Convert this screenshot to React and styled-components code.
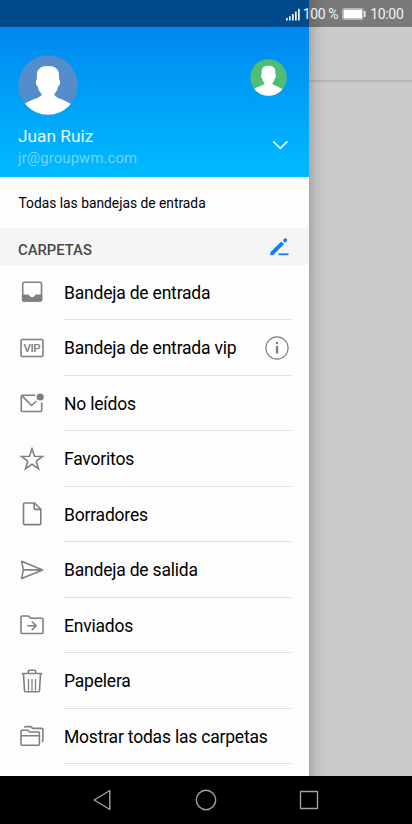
import React from 'react';
import styled, { createGlobalStyle } from 'styled-components';

const GlobalStyle = createGlobalStyle`
  * {
    box-sizing: border-box;
  }

  body {
    margin: 0;
    background: #000;
    font-family: Roboto, 'Liberation Sans', sans-serif;
  }
`;

const Screen = styled.div`
  display: flex;
  flex-direction: column;
  width: 412px;
  height: 824px;
  overflow: hidden;
`;

const StatusBar = styled.div`
  display: flex;
  flex: none;
  align-items: center;
  justify-content: flex-end;
  height: 27px;
  padding: 1px 8.5px 0 0;
  color: #f2f2f2;
  font-size: 14px;
  background: linear-gradient(to right, #004a8b 309px, #696969 309px, #797979 325px);
`;

const StatusText = styled.span`
  white-space: nowrap;
  letter-spacing: ${({ $spacing }) => $spacing || '0'};
`;

const SignalIcon = styled.svg`
  margin-right: 3px;
`;

const BatteryIcon = styled.svg`
  margin: 0 4px 0 4px;
`;

const Body = styled.div`
  display: flex;
  flex: none;
  height: 749px;
`;

const Drawer = styled.div`
  display: flex;
  flex-direction: column;
  flex: none;
  width: 309px;
  overflow: hidden;
  background: #fdfdfd;
`;

const Backdrop = styled.div`
  flex: 1;
  background: linear-gradient(to right, #a9a9a9, #bdbdbd 6px, #c9c9c9 14px, #cbcbcb 20px);
`;

const BackdropToolbar = styled.div`
  height: 55px;
  border-bottom: 2px solid rgba(0, 0, 0, 0.1);
`;

const Header = styled.div`
  display: flex;
  flex: none;
  flex-direction: column;
  height: 150px;
  padding: 27.5px 18px 0;
  background: linear-gradient(#0187f0, #00bbff);
`;

const Avatars = styled.div`
  display: flex;
  justify-content: space-between;
  align-items: flex-start;
  height: 70px;
  padding-right: 4.5px;
`;

const AccountAvatar = styled.svg`
  width: ${({ $size }) => $size}px;
  height: ${({ $size }) => $size}px;
  margin-top: ${({ $top }) => $top || 0}px;
`;

const Account = styled.div`
  display: flex;
  justify-content: space-between;
`;

const AccountName = styled.div`
  color: #e6f8ff;
  font-size: 17.3px;
  line-height: 22px;
`;

const AccountMail = styled.div`
  color: #72d3ff;
  font-size: 14.8px;
  line-height: 22px;
  letter-spacing: 0.15px;
`;

const Chevron = styled.svg`
  margin: 12px 1px 0 0;
`;

const AllInboxes = styled.div`
  flex: none;
  height: 51px;
  padding-left: 18.5px;
  color: #000;
  font-size: 13.8px;
  line-height: 52px;
`;

const SectionHeader = styled.div`
  display: flex;
  flex: none;
  align-items: center;
  justify-content: space-between;
  height: 37px;
  padding: 0 18px;
  background: #f5f5f5;
`;

const SectionTitle = styled.span`
  padding-top: 7px;
  color: #484848;
  font-size: 14.8px;
  font-weight: 500;
`;

const FolderList = styled.ul`
  margin: -0.5px 0 0;
  padding: 0;
  list-style: none;
`;

const Folder = styled.li`
  display: flex;
  height: 55.5px;
  padding: 0 18px;
`;

const FolderIcon = styled.svg`
  flex: none;
  width: 28px;
  height: 28px;
  margin: 13.5px 18px 0 0;
  fill: none;
  stroke: #808080;
  stroke-width: 1.6;
  stroke-linejoin: round;
  stroke-linecap: round;
`;

const FolderContent = styled.div`
  display: flex;
  flex: 1;
  align-items: center;
  justify-content: space-between;
  padding-top: 2px;
  border-bottom: 1px solid #e0e0e0;
`;

const FolderName = styled.span`
  color: #000;
  font-size: 17.5px;
  letter-spacing: -0.2px;
  white-space: nowrap;
`;

const InfoIcon = styled.svg`
  margin: 0 2.5px 1.5px 0;
`;

const NavBar = styled.div`
  display: flex;
  flex: none;
  align-items: center;
  justify-content: center;
  gap: 79px;
  height: 48px;
  background: #000;
`;

const NavIcon = styled.svg`
  width: 24px;
  height: 24px;
  fill: none;
  stroke: #a2a2a2;
  stroke-width: 1.4;
  stroke-linejoin: round;
`;

const folders = [
  {
    name: 'Bandeja de entrada',
    icon: (
      <>
        <rect x="4.7" y="4.2" width="18.8" height="18.8" rx="1.5" />
        <path d="M4.7 17.300h5.200c.8 0 .9 2.800 4.200 2.800s3.400-2.800 4.200-2.800h5.200v4.700a1 1 0 0 1-1 1H5.700a1 1 0 0 1-1-1z" fill="#808080" />
      </>
    ),
  },
  {
    name: 'Bandeja de entrada vip',
    info: true,
    icon: (
      <>
        <rect x="3" y="5.500" width="22" height="17" rx="1.2" />
        <text x="14" y="18" textAnchor="middle" fill="#808080" stroke="none" fontSize="11.5" fontWeight="500" textLength="17">VIP</text>
      </>
    ),
  },
  {
    name: 'No leídos',
    icon: (
      <>
        <path d="M17.3 6.2H4.3a1 1 0 0 0-1 1v14.300a1 1 0 0 0 1 1h18.400a1 1 0 0 0 1-1V13.500" strokeLinecap="butt" />
        <path d="M4 6.900l9.600 9.600 4.700-4.500" strokeLinecap="butt" />
        <circle cx="22.2" cy="8" r="3.6" fill="#808080" stroke="none" />
      </>
    ),
  },
  {
    name: 'Favoritos',
    icon: <path d="M14 4l2.600 7.300 7.900.1-6.300 4.800 2.300 7.600-6.500-4.500-6.500 4.500 2.300-7.600-6.300-4.800 7.900-.1z" strokeLinejoin="miter" />,
  },
  {
    name: 'Borradores',
    icon: (
      <>
        <path d="M16.500 3H6.700a1.200 1.200 0 0 0-1.200 1.200v19.200a1.200 1.200 0 0 0 1.200 1.200h14.900a1.200 1.200 0 0 0 1.200-1.200V9.300z" />
        <path d="M16.200 3.300v5.100a1 1 0 0 0 1 1h5.300" />
      </>
    ),
  },
  {
    name: 'Bandeja de salida',
    icon: <path d="M3.600 5.300l21 8.600-21 8.500 1.800-8.500zM5.500 13.900h18" />,
  },
  {
    name: 'Enviados',
    icon: (
      <>
        <path d="M3 21.500V6a1 1 0 0 1 1-1h6.200l2.600 2.200H24a1 1 0 0 1 1 1v13.300a1 1 0 0 1-1 1H4a1 1 0 0 1-1-1z" />
        <path d="M9.800 14.800h8.200M14.300 11l3.800 3.800-3.800 3.800" />
      </>
    ),
  },
  {
    name: 'Papelera',
    icon: (
      <>
        <path d="M4.300 6.500h19.400M10 6.300l.6-2.500a.8.8 0 0 1 .8-.6h5.200a.8.8 0 0 1 .8.6l.6 2.500" />
        <path d="M5.500 6.800l1 16.700a1.300 1.300 0 0 0 1.300 1.200h12.400a1.300 1.300 0 0 0 1.300-1.200l1-16.700" />
        <path d="M10.500 12.500V23M14 12.500V23M17.500 12.500V23" strokeWidth="1.3" />
      </>
    ),
  },
  {
    name: 'Mostrar todas las carpetas',
    icon: (
      <>
        <path d="M3 22.300V9.200a1 1 0 0 1 1-1h5.600l2 1.800h8.800a1 1 0 0 1 1 1v11.300a1 1 0 0 1-1 1H4a1 1 0 0 1-1-1zM3 13.800h18.400" />
        <path d="M6.800 5.100a1 1 0 0 1 .9-.5h5.100l2 1.800h9.100a1 1 0 0 1 1 1v11.200a1 1 0 0 1-.6.9" />
      </>
    ),
  },
];

function Avatar({ size, color, top }) {
  const clip = `avatar-${size}`;

  return (
    <AccountAvatar viewBox="0 0 60 60" $size={size} $top={top}>
      <clipPath id={clip}>
        <circle cx="30" cy="30" r="29.7" />
      </clipPath>
      <circle cx="30" cy="30" r="29.7" fill={color} />
      <path
        clipPath={`url(#${clip})`}
        fill="#fff"
        d="M30 11c7.400 0 11 3.400 11 9v4.600c1.500.4 1.400 6-.9 7-.8 4.200-2.200 5.600-3.600 7.200v1.400c2 3 9.500 4.200 16.500 8.800V62H6V49c7-4.600 15-5.800 17.500-8.800v-1.400c-1.500-1.600-3.100-3-3.700-7.200-2.300-1-2.400-6.600-.9-7V20c0-5.600 3.700-9 11.100-9z"
      />
    </AccountAvatar>
  );
}

export default function App() {
  return (
    <Screen>
      <GlobalStyle />
      <StatusBar>
        <SignalIcon width="14" height="13" viewBox="0 0 14 13" fill="#f2f2f2">
          <path d="M0 10h1.700v2.500H0zM3 8.300h1.700v4.200H3zM6 6h1.700v6.500H6zM9 3.500h1.700v9H9zM12 .8h1.700v11.700H12z" />
        </SignalIcon>
        <StatusText $spacing="-0.4px">100 %</StatusText>
        <BatteryIcon width="24" height="12" viewBox="0 0 24 12">
          <rect x=".6" y=".6" width="20.400" height="10.800" rx="1" fill="none" stroke="#bdbdbd" />
          <rect x="1.500" y="1.500" width="18.600" height="9" fill="#fff" />
          <rect x="21.800" y="3" width="1.700" height="6" fill="#eee" />
        </BatteryIcon>
        <StatusText $spacing="-0.3px">10:00</StatusText>
      </StatusBar>

      <Body>
        <Drawer>
          <Header>
            <Avatars>
              <Avatar size={60} color="#548dcc" />
              <Avatar size={37} color="#4fbd73" top={4.5} />
            </Avatars>
            <Account>
              <div>
                <AccountName>Juan Ruiz</AccountName>
                <AccountMail>jr@groupwm.com</AccountMail>
              </div>
              <Chevron width="20" height="16" viewBox="0 0 20 16" fill="none" stroke="#e2f6ff" strokeWidth="1.8">
                <path d="M3.300 4.500l7 6.800 7-6.800" />
              </Chevron>
            </Account>
          </Header>

          <AllInboxes>Todas las bandejas de entrada</AllInboxes>

          <SectionHeader>
            <SectionTitle>CARPETAS</SectionTitle>
            <svg width="22" height="22" viewBox="0 0 22 22" fill="none" stroke="#117df0">
              <path d="M3.500 16.800L13.600 6.900" strokeWidth="3.800" />
              <path d="M1.600 19l.6-3.500 3 2.900z" fill="#117df0" strokeWidth=".8" />
              <path d="M16 4.500l.4-.4" strokeWidth="3.600" strokeLinecap="round" />
              <path d="M9.500 18.300h10" strokeWidth="1.800" />
            </svg>
          </SectionHeader>

          <FolderList>
            {folders.map(({ name, icon, info }) => (
              <Folder key={name}>
                <FolderIcon viewBox="0 0 28 28">{icon}</FolderIcon>
                <FolderContent>
                  <FolderName>{name}</FolderName>
                  {info && (
                    <InfoIcon width="24" height="24" viewBox="0 0 24 24">
                      <circle cx="12" cy="12" r="11.100" fill="none" stroke="#7d7d7d" strokeWidth="1.100" />
                      <path d="M10.900 6h2.300v2.200h-2.300zM10.900 10h2.300v7.500h-2.300z" fill="#7d7d7d" />
                    </InfoIcon>
                  )}
                </FolderContent>
              </Folder>
            ))}
          </FolderList>
        </Drawer>

        <Backdrop>
          <BackdropToolbar />
        </Backdrop>
      </Body>

      <NavBar>
        <NavIcon viewBox="0 0 24 24">
          <path d="M3.200 12L18.800 2.500v19z" />
        </NavIcon>
        <NavIcon viewBox="0 0 24 24">
          <circle cx="12" cy="12" r="9.700" />
        </NavIcon>
        <NavIcon viewBox="0 0 24 24">
          <rect x="3.500" y="3.500" width="17" height="17" rx=".5" />
        </NavIcon>
      </NavBar>
    </Screen>
  );
}
